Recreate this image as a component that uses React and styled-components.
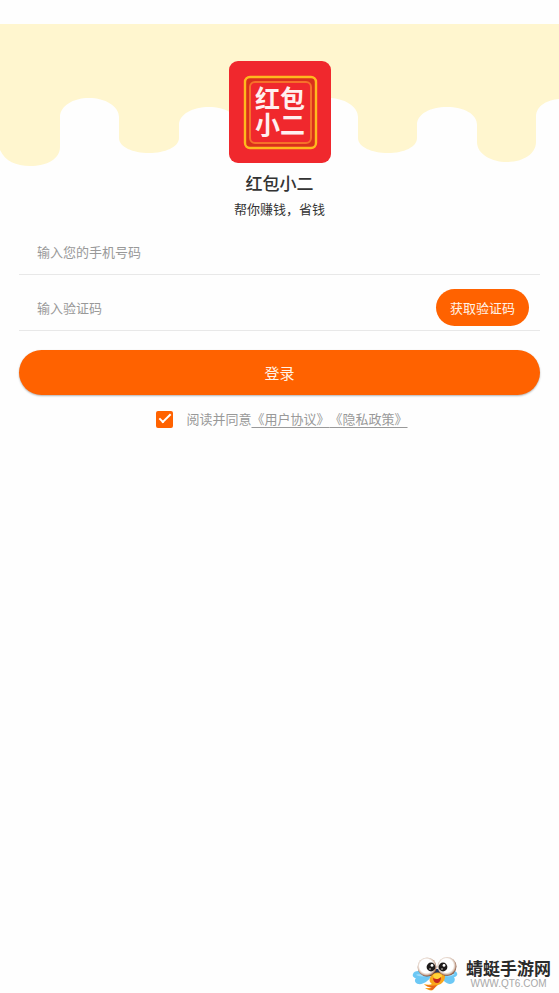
import React, { useState } from 'react';
import styled, { createGlobalStyle } from 'styled-components';

function App() {
  const [agreed, setAgreed] = useState(true);

  return (
    <Page>
      <GlobalStyle />
      <Hero>
        <Drips />
        <AppLogo />
        <Title>红包小二</Title>
        <Slogan>帮你赚钱，省钱</Slogan>
      </Hero>
      <Form onSubmit={(e) => e.preventDefault()}>
        <Field>
          <FieldInput type="tel" placeholder="输入您的手机号码" aria-label="手机号码" />
        </Field>
        <Field>
          <FieldInput type="text" placeholder="输入验证码" aria-label="验证码" />
          <CodeBtn type="button">获取验证码</CodeBtn>
        </Field>
        <LoginBtn type="submit">登录</LoginBtn>
        <Agreement>
          <CheckBox
            id="agree"
            type="checkbox"
            checked={agreed}
            onChange={(e) => setAgreed(e.target.checked)}
          />
          <span>
            <label htmlFor="agree">阅读并同意</label>
            <DocLink href="#terms">《用户协议》</DocLink>
            <DocLink href="#privacy">《隐私政策》</DocLink>
          </span>
        </Agreement>
      </Form>
      <Footer>
        <Dragonfly />
        <Brand>
          <BrandName>蜻蜓手游网</BrandName>
          <BrandUrl>WWW.QT6.COM</BrandUrl>
        </Brand>
      </Footer>
    </Page>
  );
}

export default App;

function Drips() {
  return (
    <DripSvg viewBox="0 0 559 143" aria-hidden="true">
      <path
        fill="#fff6cf"
        d="M0 0H559V75C548 76 536 81 536 93V118C536 130 523 138 507 138S477 130 477 118V101C477 90 464 83 447 83S417 90 417 101V114C417 123 404 129 388 129S358 123 358 114V93C358 82 344 74 328 74S298 82 298 93V118C298 130 284 138 268 138S238 130 238 118V101C238 90 225 83 209 83S179 90 179 101V114C179 123 165 129 149 129S119 123 119 114V93C119 82 105 74 89 74S60 82 60 93V123C60 135 47 142 30 142C16 142 5 137 0 126Z"
      />
    </DripSvg>
  );
}

function AppLogo() {
  return (
    <LogoSvg viewBox="0 0 102 102" role="img" aria-label="红包小二">
      <rect width="102" height="102" rx="9" fill="#f0282d" />
      <rect x="16" y="16" width="71" height="71" rx="5" fill="#d9301b" stroke="#ffb91e" strokeWidth="2.4" />
      <rect x="21" y="21" width="61" height="61" rx="5" fill="#f0282d" stroke="#f7702a" strokeWidth="2" />
      <LogoText x="51" y="47">红包</LogoText>
      <LogoText x="51" y="73">小二</LogoText>
    </LogoSvg>
  );
}

function Dragonfly() {
  return (
    <DragonflySvg viewBox="0 0 46 34" aria-hidden="true">
      <defs>
        <radialGradient id="eye" cx="0.47" cy="0.45" r="0.55">
          <stop offset="0.66" stopColor="#ffffff" />
          <stop offset="0.82" stopColor="#d9c3b4" />
          <stop offset="1" stopColor="#7d4128" />
        </radialGradient>
      </defs>
      <path fill="#6cc8f5" d="M16 17C9 13 2 13 1 17C0 19 2 21 4 21C2 23 3 26 6 27C11 28 16 24 19 20Z" />
      <path fill="#6cc8f5" d="M31 17C37 13 44 13 45 16C46 18 44 20 42 20C44 23 42 27 38 27C34 27 31 23 29 20Z" />
      <path fill="#a3defb" d="M14 19C9 17 5 17 4 18C6 19 10 20 14 19ZM33 19C37 17 41 16 43 17C41 19 37 20 33 19Z" />
      <path fill="#24365c" d="M14 16C17 20 20 20 23 18H28C30 20 34 19 36 16L29 12H20Z" />
      <path
        fill="#f9a51b"
        d="M19 19C21 15 29 14 33 19C33 24 30 27 26 28C24 30 22 31 21 33C19 34 16 33 13 31C16 31 18 31 19 30C16 30 13 29 12 27C15 28 18 28 20 27C17 25 17 22 19 19Z"
      />
      <path fill="#ffd33a" d="M21 18C23 16 28 16 30 18C30 21 27 23 25 22C23 22 21 20 21 18Z" />
      <path fill="#c7281d" d="M21 21C24 23 27 22 29 20C29 24 27 26 25 26C23 26 21 24 21 21Z" />
      <path fill="#e8611c" d="M14 28C18 29 21 29 25 28C23 30 22 32 20 33C18 33 17 32 16 32C18 32 19 31 20 30C18 30 15 30 14 28Z" />
      <circle cx="15" cy="10" r="9.5" fill="url(#eye)" />
      <circle cx="35" cy="9.5" r="9.5" fill="url(#eye)" />
      <circle cx="19" cy="10" r="4.4" fill="#1d1a19" />
      <circle cx="31" cy="10" r="4.4" fill="#1d1a19" />
      <circle cx="20" cy="8.4" r="1.4" fill="#ffffff" />
      <circle cx="32" cy="8.4" r="1.4" fill="#ffffff" />
      <circle cx="18" cy="12" r="1" fill="#8d8885" />
      <circle cx="30" cy="12" r="1" fill="#8d8885" />
    </DragonflySvg>
  );
}

const GlobalStyle = createGlobalStyle`
  *,
  *::before {
    box-sizing: border-box;
  }

  body {
    margin: 0;
    background-color: #fefefe;
  }

  body,
  input,
  button {
    font-family: 'Noto Sans CJK SC', 'Noto Sans', sans-serif;
  }
`;

const Page = styled.div`
  display: flex;
  flex-direction: column;
  min-height: 100vh;
  padding-top: 24px;
`;

const Hero = styled.header`
  position: relative;
  display: flex;
  flex-direction: column;
  align-items: center;
  padding-top: 37px;
`;

/* 顶部奶油色背景，垫在 logo 下面 */
const DripSvg = styled.svg`
  position: absolute;
  top: 0;
  left: 0;
  z-index: -1;
  width: 100%;
`;

const LogoSvg = styled.svg`
  width: 102px;
  height: 102px;
`;

const LogoText = styled.text`
  font-family: 'Noto Sans CJK SC', sans-serif;
  font-size: 25px;
  font-weight: 700;
  text-anchor: middle;
  fill: #fff0f0;
`;

const Title = styled.h1`
  margin: 8px 0 0;
  font-size: 17px;
  font-weight: 500;
  line-height: 24px;
  color: #333333;
`;

const Slogan = styled.p`
  margin: 4px 0 0;
  font-size: 13px;
  line-height: 20px;
  color: #333333;
`;

const Form = styled.form`
  display: flex;
  flex-direction: column;
  padding: 0 19px;
`;

const Field = styled.div`
  display: flex;
  align-items: center;
  height: 56px;
  padding: 14px 11px 4px 18px;
  border-bottom: 1px solid #e8e8e8;
`;

const FieldInput = styled.input`
  flex: 1;
  min-width: 0;
  padding: 0;
  border: none;
  outline: none;
  background-color: transparent;
  font-size: 13px;
  line-height: 20px;
  color: #333333;

  &::placeholder {
    color: #999999;
  }
`;

const RoundBtn = styled.button`
  border: none;
  border-radius: 24px;
  background-color: #ff6200;
  color: #fff3e8;
  cursor: pointer;
`;

const CodeBtn = styled(RoundBtn)`
  height: 37px;
  padding: 0 14px;
  font-size: 13px;
`;

const LoginBtn = styled(RoundBtn)`
  height: 45px;
  margin-top: 19px;
  font-size: 15px;
  box-shadow: 0 1px 2px rgba(0, 0, 0, 0.3);
`;

const Agreement = styled.div`
  display: flex;
  justify-content: center;
  align-items: center;
  gap: 13px;
  margin-top: 14px;
  padding-left: 5px;
  font-size: 13px;
  line-height: 20px;
  color: #999999;
  text-spacing-trim: space-all;
`;

const CheckBox = styled.input`
  appearance: none;
  width: 17px;
  height: 17px;
  margin: 0;
  border: 2px solid #ff6200;
  border-radius: 2px;
  cursor: pointer;

  &:checked {
    display: grid;
    place-items: center;
    background-color: #ff6200;
  }

  &:checked::before {
    content: '';
    width: 12px;
    height: 6px;
    border: solid #ffffff;
    border-width: 0 0 2px 2px;
    transform: translateY(-2px) rotate(-45deg);
  }
`;

const DocLink = styled.a`
  color: #999999;
  text-decoration: underline;
  text-underline-offset: 3px;
`;

const Footer = styled.footer`
  display: flex;
  justify-content: flex-end;
  align-items: center;
  gap: 8px;
  margin-top: auto;
  padding: 0 8px 2px 0;
`;

const DragonflySvg = styled.svg`
  width: 46px;
  height: 34px;
`;

const Brand = styled.div`
  display: flex;
  flex-direction: column;
  align-items: center;
`;

const BrandName = styled.strong`
  font-size: 17px;
  font-weight: 700;
  line-height: 20px;
  color: #2b2b2b;
`;

const BrandUrl = styled.span`
  font-family: 'Liberation Sans', sans-serif;
  font-size: 10px;
  line-height: 12px;
  color: #a8a8a8;
`;
